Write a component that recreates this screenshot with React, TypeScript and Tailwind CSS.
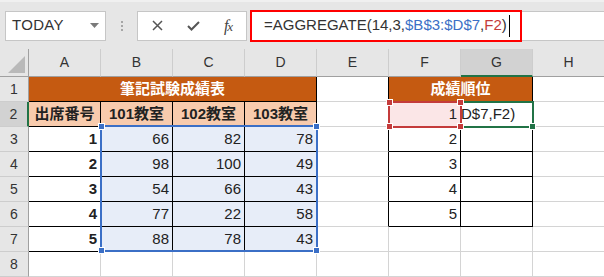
import React from 'react';

const COLS = ['A', 'B', 'C', 'D', 'E', 'F', 'G', 'H'];

type CellDef = {
  text?: React.ReactNode;
  span?: number;
  cls?: string;
};

const font = "font-['Liberation_Sans','Noto_Sans_CJK_JP',sans-serif]";

// one row of the sheet = list of cells (merged ones use span)
const rows: CellDef[][] = [
  [
    { text: '筆記試験成績表', span: 4, cls: 'bg-[#c55a11] text-white font-bold justify-center border-black' },
    { cls: 'border-r-black' },
    { text: '成績順位', span: 2, cls: 'bg-[#c55a11] text-white font-bold justify-center border-black' },
    {},
  ],
  [
    { text: '出席番号', cls: 'bg-[#f8cbad] font-bold justify-center border-black' },
    { text: '101教室', cls: 'bg-[#f8cbad] font-bold justify-center border-black' },
    { text: '102教室', cls: 'bg-[#f8cbad] font-bold justify-center border-black' },
    { text: '103教室', cls: 'bg-[#f8cbad] font-bold justify-center border-black' },
    { cls: 'border-r-black' },
    { text: '1', cls: 'bg-[#fbe6e7] justify-end border-black' },
    { text: <span className="-ml-[3px] whitespace-nowrap">D$7,F2)</span>, cls: 'justify-start border-black overflow-hidden' },
    {},
  ],
];

const data = [
  [1, 66, 82, 78],
  [2, 98, 100, 49],
  [3, 54, 66, 43],
  [4, 77, 22, 58],
  [5, 88, 78, 43],
];

data.forEach((d, i) => {
  const rank = i + 2 <= 5 ? i + 2 : null;
  rows.push([
    { text: d[0], cls: 'font-bold justify-end border-black' },
    { text: d[1], cls: 'bg-[#e7edf8] justify-end border-black' },
    { text: d[2], cls: 'bg-[#e7edf8] justify-end border-black' },
    { text: d[3], cls: 'bg-[#e7edf8] justify-end border-black' },
    { cls: i < 4 ? 'border-r-black' : '' },
    rank ? { text: rank, cls: 'justify-end border-black' } : {},
    rank ? { cls: 'border-black' } : {},
    {},
  ]);
});

rows.push([{}, {}, {}, {}, {}, {}, {}, {}]);

function Handle({ pos, color }: { pos: string; color: string }) {
  return <div className={`absolute w-[7px] h-[7px] border border-white ${color} ${pos}`} />;
}

export default function App() {
  return (
    <div className={`w-[604px] h-[277px] overflow-hidden bg-white text-[#222] ${font}`}>
      {/* toolbar */}
      <div className="h-[49px] bg-[#e6e6e6] border-t-2 border-[#f0f0f0] flex items-center pl-[5px]">
        <div className="w-[101px] h-[30px] bg-white border border-[#c6c6c6] flex items-center justify-between pl-[6px] pr-[6px]">
          <span className="text-[15px] text-[#333] tracking-[0.3px]">TODAY</span>
          <svg width="9" height="6" viewBox="0 0 9 6"><path d="M0 0h9L4.5 5z" fill="#7a7a7a" /></svg>
        </div>
        <div className="w-[31px] flex flex-col items-center gap-[2px]">
          <div className="w-[2px] h-[2px] bg-[#a6a6a6]" />
          <div className="w-[2px] h-[2px] bg-[#a6a6a6]" />
          <div className="w-[2px] h-[2px] bg-[#a6a6a6]" />
        </div>
        <div className="w-[110px] h-[30px] bg-white border border-[#c6c6c6] flex items-center">
          <div className="w-[38px] flex justify-center">
            <svg width="11" height="11" viewBox="0 0 11 11"><path d="M1 1l9 9M10 1l-9 9" stroke="#555" strokeWidth="1.5" /></svg>
          </div>
          <div className="w-[34px] flex justify-center">
            <svg width="13" height="10" viewBox="0 0 13 10"><path d="M1 5l3.5 3.5L12 1" stroke="#555" strokeWidth="2" fill="none" /></svg>
          </div>
          <div className="w-[36px] flex justify-center">
            <span className="font-['Liberation_Serif',serif] italic text-[16px] text-[#444] tracking-[-1px]">f<span className="text-[13px]">x</span></span>
          </div>
        </div>
        <div className="ml-[3px] flex-1 h-[30px] bg-white border-y border-[#c6c6c6] flex items-center">
          <div className="w-[272px] h-[32px] border-2 border-[#ff0000] flex items-center pl-[12px]">
            <span className="text-[15px] text-[#333] whitespace-nowrap">
              =AGGREGATE(14,3,<span className="text-[#3b6fc6]">$B$3:$D$7</span>,<span className="text-[#c43b3b]">F2</span>)
            </span>
            <div className="ml-[2px] w-px h-[22px] bg-black" />
          </div>
        </div>
      </div>

      {/* sheet */}
      <div className="relative">
        <div className="grid grid-cols-[29px_repeat(8,72px)] auto-rows-[25px] grid-rows-[28px]">
          <div className="bg-[#e6e6e6] border-r border-b border-[#a0a0a0] flex items-end justify-end p-[3px]">
            <svg width="17" height="17" viewBox="0 0 17 17"><path d="M17 0v17H0z" fill="#b9b9b9" /></svg>
          </div>
          {COLS.map((c) => (
            <div
              key={c}
              className={`flex items-center justify-center text-[14px] text-[#333] border-r border-[#cdcdcd] ${
                c === 'G' ? 'bg-[#d2d2d2] border-b-2 border-b-[#217346]' : 'bg-[#e6e6e6] border-b border-b-[#a0a0a0]'
              }`}
            >
              {c}
            </div>
          ))}
          {rows.map((row, ri) => (
            <React.Fragment key={ri}>
              <div
                className={`flex items-center justify-center text-[14px] text-[#333] border-b border-[#cdcdcd] ${
                  ri === 1 ? 'bg-[#d2d2d2] border-r-2 border-r-[#217346]' : 'bg-[#e6e6e6] border-r border-r-[#a0a0a0]'
                }`}
              >
                {ri + 1}
              </div>
              {row.map((cell, ci) => (
                <div
                  key={ci}
                  className={`flex items-center px-[3px] text-[15px] border-r border-b border-[#d4d4d4] ${cell.span === 4 ? 'col-span-4' : cell.span === 2 ? 'col-span-2' : ''} ${cell.cls ?? ''}`}
                >
                  {cell.text}
                </div>
              ))}
            </React.Fragment>
          ))}
        </div>

        {/* selection B3:D7 */}
        <div className="absolute left-[100px] top-[76px] w-[218px] h-[127px] border-2 border-[#3b6fc6]">
          <Handle pos="-left-[4px] -top-[4px]" color="bg-[#3b6fc6]" />
          <Handle pos="-right-[4px] -top-[4px]" color="bg-[#3b6fc6]" />
          <Handle pos="-left-[4px] -bottom-[4px]" color="bg-[#3b6fc6]" />
          <Handle pos="-right-[4px] -bottom-[4px]" color="bg-[#3b6fc6]" />
        </div>
        {/* active cell G2 */}
        <div className="absolute left-[460px] top-[52px] w-[74px] h-[27px] border-2 border-[#217346]">
          <Handle pos="-right-[4px] -bottom-[4px]" color="bg-[#217346]" />
        </div>
        {/* referenced F2 */}
        <div className="absolute left-[388px] top-[52px] w-[74px] h-[27px] border-2 border-[#c43b3b]">
          <Handle pos="-left-[4px] -top-[4px]" color="bg-[#c43b3b]" />
          <Handle pos="-right-[4px] -top-[4px]" color="bg-[#c43b3b]" />
          <Handle pos="-left-[4px] -bottom-[4px]" color="bg-[#c43b3b]" />
          <Handle pos="-right-[4px] -bottom-[4px]" color="bg-[#c43b3b]" />
        </div>
      </div>
    </div>
  );
}
